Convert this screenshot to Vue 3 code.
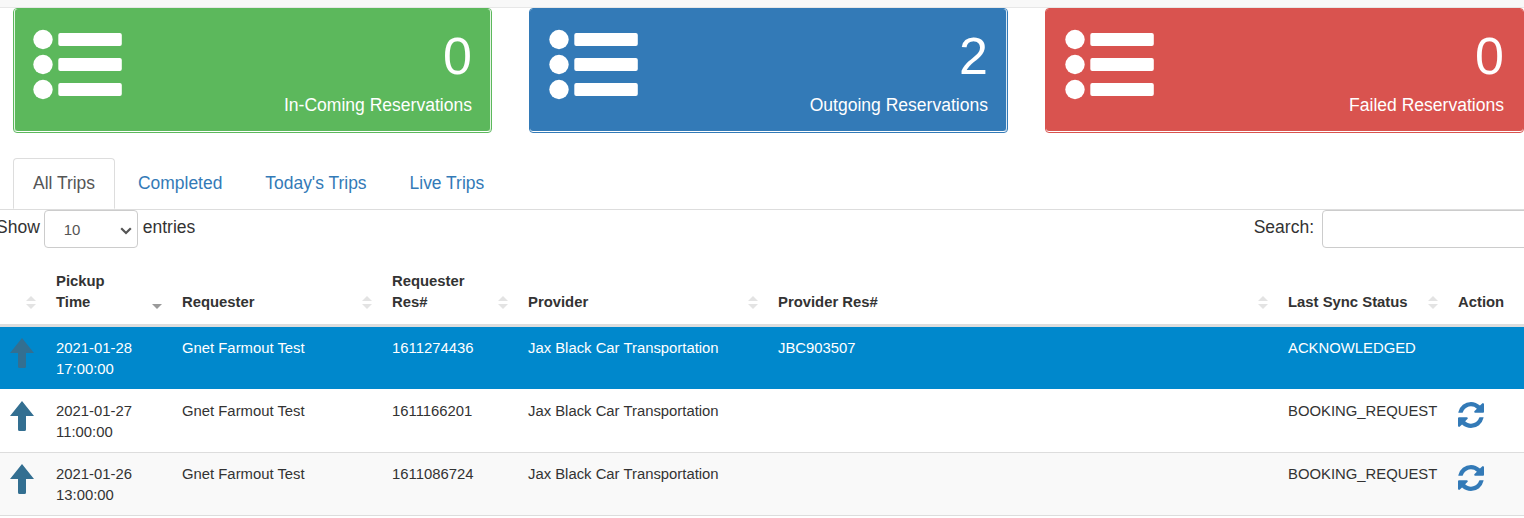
<script setup>
const cards = [
  { kind: 'green', count: 0, label: 'In-Coming Reservations' },
  { kind: 'blue', count: 2, label: 'Outgoing Reservations' },
  { kind: 'red', count: 0, label: 'Failed Reservations' },
];

const tabs = ['All Trips', 'Completed', "Today's Trips", 'Live Trips'];

const columns = [
  { key: 'dir', label: '', width: 46, sort: true },
  { key: 'time', label: 'Pickup Time', width: 126, sort: 'desc' },
  { key: 'requester', label: 'Requester', width: 210, sort: true },
  { key: 'res', label: 'Requester Res#', width: 136, sort: true },
  { key: 'provider', label: 'Provider', width: 250, sort: true },
  { key: 'providerRes', label: 'Provider Res#', width: 510, sort: true },
  { key: 'status', label: 'Last Sync Status', width: 170, sort: true },
  { key: 'action', label: 'Action', width: 76, sort: false },
];

const rows = [
  { date: '2021-01-28', time: '17:00:00', res: '1611274436', providerRes: 'JBC903507', status: 'ACKNOWLEDGED', selected: true },
  { date: '2021-01-27', time: '11:00:00', res: '1611166201', providerRes: '', status: 'BOOKING_REQUEST', selected: false },
  { date: '2021-01-26', time: '13:00:00', res: '1611086724', providerRes: '', status: 'BOOKING_REQUEST', selected: false },
];

const refreshPath =
  'M1639 1056q0 5-1 7-64 268-268 434.5t-478 166.5q-146 0-282.5-55t-243.5-157l-129 129q-19 19-45 19t-45-19-19-45v-448q0-26 19-45t45-19h448q26 0 45 19t19 45-19 45l-137 137q71 66 161 102t187 36q134 0 250-65t186-179q11-17 53-117 8-23 30-23h192q13 0 22.5 9.5t9.5 22.5zm25-800v448q0 26-19 45t-45 19h-448q-26 0-45-19t-19-45 19-45l138-138q-148-137-349-137-134 0-250 65t-186 179q-11 17-53 117-8 23-30 23h-199q-13 0-22.5-9.5t-9.5-22.5v-7q65-268 270-434.5t480-166.5q146 0 284 55.5t245 156.5l130-129q19-19 45-19t45 19 19 45z';
</script>

<template>
  <div class="page">
    <div class="topbar"></div>

    <div class="cards">
      <div v-for="card in cards" :key="card.label" class="card" :class="card.kind">
        <div class="card-inner">
          <svg class="list-icon" width="89" height="71" viewBox="0 0 89 71">
            <g v-for="y in [0, 25, 50]" :key="y" :transform="`translate(0 ${y})`">
              <circle cx="10" cy="10.500" r="9.700" fill="#fff" />
              <rect x="25.300" y="4" width="63.500" height="13" rx="2" fill="#fff" />
            </g>
          </svg>
          <div class="card-text">
            <div class="count">{{ card.count }}</div>
            <div class="label">{{ card.label }}</div>
          </div>
        </div>
      </div>
    </div>

    <ul class="tabs">
      <li v-for="(tab, i) in tabs" :key="tab" class="tab" :class="{ active: i === 0 }">{{ tab }}</li>
    </ul>

    <div class="controls">
      <label class="length">
        Show
        <span class="select">10
          <svg width="12" height="8" viewBox="0 0 12 8"><path d="M1.200 1.200 6 6l4.800-4.800" fill="none" stroke="#555" stroke-width="2.200" /></svg>
        </span>
        entries
      </label>
      <label class="search">
        Search:
        <input type="text" />
      </label>
    </div>

    <table class="trips">
      <colgroup>
        <col v-for="c in columns" :key="c.key" :style="{ width: c.width + 'px' }" />
      </colgroup>
      <thead>
        <tr>
          <th v-for="c in columns" :key="c.key">
            {{ c.label }}
            <span v-if="c.sort === true" class="sort">
              <i class="up"></i><i class="down"></i>
            </span>
            <span v-else-if="c.sort === 'desc'" class="sort">
              <i class="down dark"></i>
            </span>
          </th>
        </tr>
      </thead>
      <tbody>
        <tr v-for="(row, i) in rows" :key="row.res" :class="{ selected: row.selected, odd: i === 2 }">
          <td class="dir">
            <svg width="24" height="30" viewBox="0 0 24 30">
              <path d="M12 0 24 15H16V28.500Q16 30 14.500 30H9.500Q8 30 8 28.500V15H0Z" fill="#336f91" />
            </svg>
          </td>
          <td>{{ row.date }}<br />{{ row.time }}</td>
          <td>Gnet Farmout Test</td>
          <td>{{ row.res }}</td>
          <td>Jax Black Car Transportation</td>
          <td>{{ row.providerRes }}</td>
          <td>{{ row.status }}</td>
          <td class="action">
            <svg v-if="!row.selected" width="26" height="26" viewBox="128 128 1536 1536">
              <path :d="refreshPath" fill="#337ab7" />
            </svg>
          </td>
        </tr>
      </tbody>
    </table>
  </div>
</template>

<style>
html,
body {
  margin: 0;
  background: #fff;
}
</style>

<style scoped>
.page {
  width: 1524px;
  height: 518px;
  overflow: hidden;
  font-family: 'Liberation Sans', Arial, sans-serif;
  color: #333;
}

.topbar {
  height: 7px;
  background: #f8f8f8;
  border-bottom: 1px solid #e7e7e7;
}

.cards {
  display: flex;
  gap: 37px;
  padding-left: 13px;
}

.card {
  width: 479px;
  height: 125px;
  box-sizing: border-box;
  border-radius: 4px;
  border: 1px solid;
  color: #fff;
}

.card-inner {
  height: 122px;
  box-sizing: border-box;
  padding: 20px 19px 0 19px;
  display: flex;
  justify-content: space-between;
  border-radius: 3px;
}

.card.green {
  border-color: #5cb85c;
}

.card.green .card-inner {
  background: #5cb85c;
  box-shadow: inset 1px 0 0 #e4f3e4, inset -1px 0 0 #e4f3e4;
}

.card.blue {
  border-color: #337ab7;
}

.card.blue .card-inner {
  background: #337ab7;
  box-shadow: inset -1px 0 0 #dce9f4;
}

.card.red {
  border-color: #d9534f;
}

.card.red .card-inner {
  background: #d9534f;
}

.card-text {
  text-align: right;
}

.count {
  font-size: 52px;
  line-height: 55px;
}

.label {
  font-size: 17.550px;
  line-height: 26px;
  margin-top: 8px;
}

.tabs {
  list-style: none;
  display: flex;
  margin: 25px 0 0;
  padding: 0 0 0 13px;
  border-bottom: 1px solid #ddd;
  height: 51px;
}

.tab {
  padding: 0 19px;
  margin-right: 3px;
  font-size: 17.450px;
  line-height: 48px;
  height: 51px;
  box-sizing: border-box;
  color: #337ab7;
  border: 1px solid transparent;
  border-radius: 4px 4px 0 0;
}

.tab.active {
  color: #555;
  background: #fff;
  border-color: #ddd #ddd #fff;
}

.controls {
  display: flex;
  justify-content: space-between;
  font-size: 17.500px;
  height: 54px;
  margin-left: -4px;
}

.length,
.search {
  display: flex;
  align-items: flex-start;
  gap: 4px;
  line-height: 34px;
}

.select {
  width: 94px;
  height: 38px;
  box-sizing: border-box;
  border: 1px solid #ccc;
  border-radius: 4px;
  font-size: 15px;
  line-height: 38px;
  padding-left: 19px;
  margin-right: 1px;
  color: #555;
  position: relative;
}

.select svg {
  position: absolute;
  right: 5px;
  top: 16px;
}

.search {
  gap: 8px;
}

.search input {
  width: 220px;
  height: 38px;
  box-sizing: border-box;
  border: 1px solid #ccc;
  border-radius: 4px;
  margin-right: -18px;
}

.trips {
  table-layout: fixed;
  border-collapse: collapse;
  width: 1524px;
  font-size: 14.850px;
  line-height: 21px;
}

.trips th {
  position: relative;
  text-align: left;
  vertical-align: bottom;
  padding: 7px 30px 11px 10px;
  font-weight: bold;
  border-bottom: 3px solid #ddd;
}

.trips td {
  vertical-align: top;
  padding: 11px 10px 9px;
  border-bottom: 1px solid #ddd;
}

.sort {
  position: absolute;
  right: 10px;
  bottom: 15px;
  width: 10px;
  height: 13px;
}

.sort i {
  position: absolute;
  left: 0;
  border-left: 5px solid transparent;
  border-right: 5px solid transparent;
}

.sort .up {
  top: 0;
  border-bottom: 5px solid #e3e3e3;
}

.sort .down {
  bottom: 0;
  border-top: 5px solid #e3e3e3;
}

.sort .dark {
  border-top-color: #9a9a9a;
}

.selected td {
  background: #0088cc;
  color: #fff;
  border-bottom-color: #fff;
}

.odd td {
  background: #f9f9f9;
}

.dir svg {
  display: block;
  margin-top: 0;
}

.action svg {
  display: block;
  margin-top: 1px;
}
</style>
